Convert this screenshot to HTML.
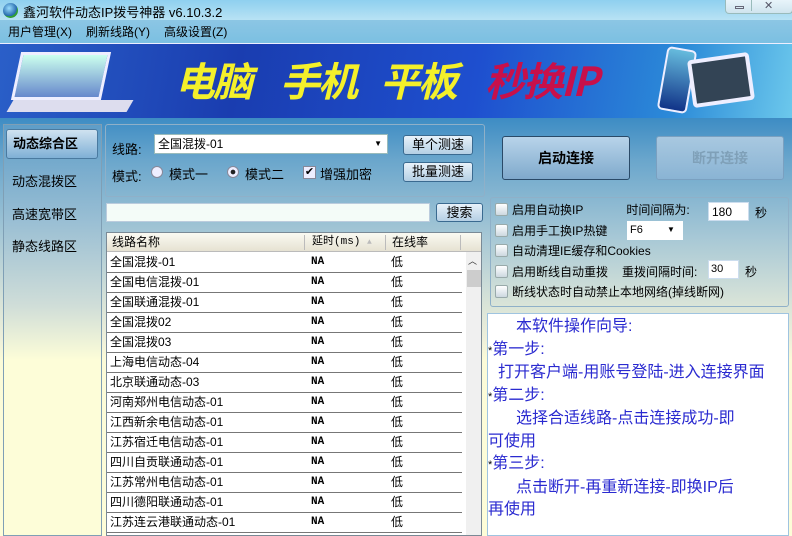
<!DOCTYPE html><html style="height:536px;overflow:hidden"><head><meta charset="utf-8"><style>
*{margin:0;padding:0;box-sizing:border-box}
html,body{overflow:hidden}
body{width:792px;height:536px;position:relative;font-family:"Liberation Sans","Noto Sans CJK SC",sans-serif;font-size:12px;color:#000;
background:linear-gradient(180deg,#5aaed8 0px,#8cc6e4 20px,#7cc0e2 42px,#3d8cc4 118px,#6aa6cc 160px,#a9c9d6 240px,#d6e2d8 300px,#eef0da 340px,#fbfbd8 360px,#fdfdd8 536px)}
.a{position:absolute}
.title{left:0;top:0;width:792px;height:20px;background:linear-gradient(#8fd0ef,#b8e2f4)}
.menu span{margin-right:14px}
.banner{left:0;top:43px;width:792px;height:75px;background:linear-gradient(100deg,#2a5fc8 0%,#1a3db0 30%,#1e4fcf 60%,#2b8ad8 85%,#6cc8ec 100%);border-top:1px solid #eef;overflow:hidden}
.bt{position:absolute;top:8px;font-size:40px;font-weight:bold;font-style:italic;color:#f4f02a;font-family:'Noto Sans CJK SC',sans-serif;line-height:54px;letter-spacing:-2px}
.side{left:3px;top:124px;width:99px;height:412px;border:1px solid #7f9fb5;background:linear-gradient(180deg,#5e9dc8 0,#9cc0d4 100px,#cfddd8 180px,#fdfdd8 235px);}
.tab{position:absolute;left:10px;font-size:13px}
.btn{position:absolute;border:1px solid #3a6a90;border-radius:3px;background:linear-gradient(#e8f2fa,#b4cfe4);text-align:center;font-size:13px;line-height:18px}
.grp{position:absolute;border:1px solid #8fb0c8;border-radius:3px}
.tbl{left:106px;top:232px;width:376px;height:304px;background:#fff;border:1px solid #7a8a96;overflow:hidden}
.row{position:absolute;left:0;width:355px;height:20px;border-bottom:1px solid #777;font-size:12px;line-height:19px}
.row b{position:absolute;font-weight:normal}
.cb{display:inline-block;width:13px;height:13px;border:1px solid #9aa;border-radius:2px;background:linear-gradient(#fff,#cdd8e0);vertical-align:-2px;margin-right:4px}
.guide{left:487px;top:313px;width:302px;height:223px;background:#fff;border:1px solid #9fc4e0;color:#2a2ad0;font-size:16px;line-height:22.5px;font-family:"Liberation Sans","Noto Sans CJK SC",sans-serif;overflow:hidden;white-space:nowrap}
</style></head><body>
<div class="a title"></div>
<div class="a" style="left:3px;top:3px;width:15px;height:15px;border-radius:50%;background:radial-gradient(circle at 40% 35%,#9df,#26a 60%,#3a3 61%,#263)"></div>
<div class="a" style="left:23px;top:2px;font-size:13px">鑫河软件动态IP拨号神器 v6.10.3.2</div>
<div class="a" style="left:725px;top:0;width:68px;height:14px;border:1px solid #9bb;border-top:0;border-radius:0 0 4px 4px;background:linear-gradient(#e8f4fa,#cfe4ee);font-size:11px;color:#556"><span style="position:absolute;left:9px;top:6px;width:9px;height:3px;border:1px solid #667"></span><span style="position:absolute;left:25px;top:-3px;height:14px;border-left:1px solid #9bb"></span><span style="position:absolute;left:38px;top:-1px">✕</span></div>
<div class="a menu" style="left:8px;top:23px;font-size:12px"><span>用户管理(X)</span><span>刷新线路(Y)</span><span>高级设置(Z)</span></div>
<div class="a banner">
 <div class="a" style="left:16px;top:8px;width:90px;height:48px;background:linear-gradient(#cfe,#68c);transform:skewX(-12deg);border:3px solid #eef"></div>
 <div class="a" style="left:10px;top:56px;width:120px;height:12px;background:#dde;transform:skewX(-30deg)"></div>
 <div class="bt" style="left:175px">电脑</div>
 <div class="bt" style="left:280px">手机</div>
 <div class="bt" style="left:380px">平板</div>
 <div class="bt" style="left:485px;color:#c8104a">秒换IP</div>
 <div class="a" style="left:662px;top:4px;width:30px;height:64px;border:2px solid #eef;border-radius:5px;background:linear-gradient(#6bd,#138);transform:rotate(10deg)"></div>
 <div class="a" style="left:690px;top:12px;width:62px;height:48px;border:4px solid #eef;border-radius:4px;background:#345;transform:rotate(-8deg)"></div>
</div>
<div class="a side">
 <div class="a" style="left:2px;top:4px;width:92px;height:30px;border:1px solid #4a7aa0;border-radius:3px;background:linear-gradient(#cfe2f0,#7fb0d6);font-weight:bold;font-size:13px;line-height:28px;padding-left:6px">动态综合区</div>
 <div class="tab" style="left:8px;top:46px">动态混拨区</div>
 <div class="tab" style="left:8px;top:79px">高速宽带区</div>
 <div class="tab" style="left:8px;top:111px">静态线路区</div>
</div>
<div class="grp" style="left:105px;top:124px;width:380px;height:73px"></div>
<div class="a" style="left:112px;top:139px;font-size:13px">线路:</div>
<div class="a" style="left:154px;top:134px;width:234px;height:20px;background:#fff;border:1px solid #9bb;font-size:12px;line-height:18px;padding-left:3px">全国混拨-01<span style="position:absolute;right:5px;top:0;font-size:8px">▼</span></div>
<div class="a" style="left:112px;top:166px;font-size:13px">模式:</div>
<div class="a" style="left:151px;top:166px;width:12px;height:12px;border-radius:50%;border:1px solid #889;background:#eef"></div>
<div class="a" style="left:169px;top:164px;font-size:13px">模式一</div>
<div class="a" style="left:227px;top:166px;width:12px;height:12px;border-radius:50%;border:1px solid #889;background:radial-gradient(#222 30%,#eef 36%)"></div>
<div class="a" style="left:245px;top:164px;font-size:13px">模式二</div>
<div class="a" style="left:303px;top:166px;width:13px;height:13px;border:1px solid #889;background:#eef;font-size:11px;line-height:11px;text-align:center">✔</div>
<div class="a" style="left:320px;top:164px;font-size:13px">增强加密</div>
<div class="btn" style="left:403px;top:135px;width:70px;height:20px">单个测速</div>
<div class="btn" style="left:403px;top:162px;width:70px;height:20px">批量测速</div>
<div class="a" style="left:106px;top:203px;width:324px;height:19px;background:#f4fcf8;border:1px solid #bcd"></div>
<div class="btn" style="left:436px;top:203px;width:47px;height:19px">搜索</div>
<div class="a tbl">
 <div class="a" style="left:0;top:0;width:374px;height:19px;background:linear-gradient(#fafaf2,#e6e2d2);border-bottom:1px solid #bbb;font-size:12px;line-height:19px">
  <span class="a" style="left:5px">线路名称</span><span class="a" style="left:197px;top:2px;height:15px;border-left:1px solid #bbb"></span>
  <span class="a" style="left:205px;font-family:'Liberation Mono',monospace;font-size:11px">延时(ms) <span style="color:#bbb;font-size:8px">▲</span></span><span class="a" style="left:278px;top:2px;height:15px;border-left:1px solid #bbb"></span>
  <span class="a" style="left:285px">在线率</span><span class="a" style="left:353px;top:2px;height:15px;border-left:1px solid #bbb"></span>
 </div>
 <div class="a" style="left:359px;top:19px;width:16px;height:284px;background:#f0f0f0"><div class="a" style="left:2px;top:2px;font-size:9px;color:#333">︿</div><div class="a" style="left:1px;top:18px;width:14px;height:17px;background:#cdcdcd"></div></div>
 <div id="rows"></div>
</div>
<div class="btn" style="left:502px;top:136px;width:128px;height:44px;line-height:42px;font-weight:bold;font-size:14px;background:linear-gradient(#b8d4ea,#7fa9cc);border-color:#2a4a68">启动连接</div>
<div class="btn" style="left:656px;top:136px;width:128px;height:44px;line-height:42px;font-weight:bold;font-size:14px;color:#7fa0b8;background:linear-gradient(#a8c8e0,#8ab4d4);border-color:#7aa0c0">断开连接</div>
<div class="grp" style="left:490px;top:197px;width:299px;height:110px"></div>
<div class="a" style="left:495px;top:200px;font-size:12px;line-height:20.5px">
<div><span class="cb"></span>启用自动换IP<span style="margin-left:43px">时间间隔为:</span></div>
<div><span class="cb"></span>启用手工换IP热键</div>
<div><span class="cb"></span>自动清理IE缓存和Cookies</div>
<div><span class="cb"></span>启用断线自动重拨<span style="margin-left:14px">重拨间隔时间:</span></div>
<div><span class="cb"></span>断线状态时自动禁止本地网络(掉线断网)</div>
</div>
<div class="a" style="left:708px;top:202px;width:41px;height:19px;background:#fff;border:1px solid #cde;padding-left:3px;line-height:18px">180</div>
<div class="a" style="left:755px;top:204px">秒</div>
<div class="a" style="left:627px;top:221px;width:56px;height:19px;background:#fff;font-size:11px;line-height:18px;padding-left:3px">F6<span style="position:absolute;left:40px;font-size:8px">▼</span></div>
<div class="a" style="left:708px;top:260px;width:31px;height:19px;background:#fff;border:1px solid #cde;padding-left:2px;font-size:11px;line-height:16px">30</div>
<div class="a" style="left:745px;top:263px">秒</div>
<div class="a guide">
<div style="padding-left:28px;margin-top:2px">本软件操作向导:</div>
<div><span style="color:#000;font-size:11px">*</span>第一步:</div>
<div style="padding-left:10px">打开客户端-用账号登陆-进入连接界面</div>
<div><span style="color:#000;font-size:11px">*</span>第二步:</div>
<div style="padding-left:28px">选择合适线路-点击连接成功-即</div>
<div>可使用</div>
<div><span style="color:#000;font-size:11px">*</span>第三步:</div>
<div style="padding-left:28px">点击断开-再重新连接-即换IP后</div>
<div>再使用</div>
<div style="margin-top:10px;padding-left:20px;color:#1a9a1a;font-weight:bold;font-size:13px">【点击这里可以查询您当前的IP地址】</div>
</div>
<script>
var n=["全国混拨-01","全国电信混拨-01","全国联通混拨-01","全国混拨02","全国混拨03","上海电信动态-04","北京联通动态-03","河南郑州电信动态-01","江西新余电信动态-01","江苏宿迁电信动态-01","四川自贡联通动态-01","江苏常州电信动态-01","四川德阳联通动态-01","江苏连云港联通动态-01"];
var h="";for(var i=0;i<n.length;i++){h+='<div class="row" style="top:'+(20+i*20)+'px"><b style="left:3px">'+n[i]+'</b><b style="left:204px;font-family:\'Liberation Mono\',monospace;font-size:11px;font-weight:bold">NA</b><b style="left:284px">低</b></div>';}
document.getElementById("rows").innerHTML=h;
</script>
</body></html>
